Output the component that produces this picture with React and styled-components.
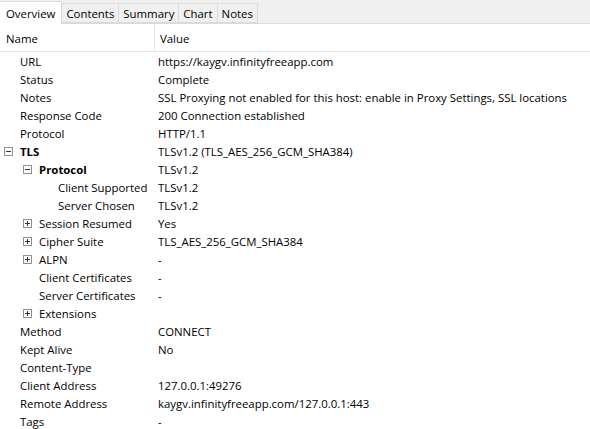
import React from 'react';
import styled, { createGlobalStyle } from 'styled-components';

const GlobalStyle = createGlobalStyle`
  html, body {
    margin: 0;
    padding: 0;
    background: #ffffff;
  }
  body {
    font-family: "Segoe UI", "Open Sans", "Noto Sans", sans-serif;
    font-size: 11.4px;
    color: #000;
  }
`;

const tabs = ['Overview', 'Contents', 'Summary', 'Chart', 'Notes'];

const rows = [
  { name: 'URL', value: 'https://kaygv.infinityfreeapp.com' },
  { name: 'Status', value: 'Complete' },
  { name: 'Notes', value: 'SSL Proxying not enabled for this host: enable in Proxy Settings, SSL locations' },
  { name: 'Response Code', value: '200 Connection established' },
  { name: 'Protocol', value: 'HTTP/1.1' },
  { name: 'TLS', value: 'TLSv1.2 (TLS_AES_256_GCM_SHA384)', level: 0, toggle: 'open', bold: true },
  { name: 'Protocol', value: 'TLSv1.2', level: 1, toggle: 'open', bold: true },
  { name: 'Client Supported', value: 'TLSv1.2', level: 2 },
  { name: 'Server Chosen', value: 'TLSv1.2', level: 2 },
  { name: 'Session Resumed', value: 'Yes', level: 1, toggle: 'closed' },
  { name: 'Cipher Suite', value: 'TLS_AES_256_GCM_SHA384', level: 1, toggle: 'closed' },
  { name: 'ALPN', value: '-', level: 1, toggle: 'closed' },
  { name: 'Client Certificates', value: '-', level: 1 },
  { name: 'Server Certificates', value: '-', level: 1 },
  { name: 'Extensions', value: '', level: 1, toggle: 'closed' },
  { name: 'Method', value: 'CONNECT' },
  { name: 'Kept Alive', value: 'No' },
  { name: 'Content-Type', value: '' },
  { name: 'Client Address', value: '127.0.0.1:49276' },
  { name: 'Remote Address', value: 'kaygv.infinityfreeapp.com/127.0.0.1:443' },
  { name: 'Tags', value: '-' },
];

function Toggle({ open }) {
  return (
    <ToggleBox>
      <svg width="9" height="9" viewBox="0 0 9 9">
        <rect x="0.5" y="0.5" width="8" height="8" fill="#fff" stroke="#919191" />
        <line x1="2" y1="4.5" x2="7" y2="4.5" stroke="#333" />
        {!open && <line x1="4.5" y1="2" x2="4.5" y2="7" stroke="#333" />}
      </svg>
    </ToggleBox>
  );
}

export default function App() {
  return (
    <>
      <GlobalStyle />
      <Panel>
        <TabBar>
          {tabs.map((t, i) => (
            <Tab key={t} $active={i === 0}>{t}</Tab>
          ))}
        </TabBar>
        <Table>
          <HeaderRow>
            <HeaderCell>Name</HeaderCell>
            <HeaderCell $divider>Value</HeaderCell>
          </HeaderRow>
          {rows.map((r, i) => (
            <Row key={i}>
              <NameCell $level={r.level || 0} $bold={r.bold}>
                {r.toggle ? <Toggle open={r.toggle === 'open'} /> : <ToggleSpace />}
                <span>{r.name}</span>
              </NameCell>
              <ValueCell>{r.value}</ValueCell>
            </Row>
          ))}
        </Table>
      </Panel>
    </>
  );
}

const Panel = styled.div`
  width: 590px;
  height: 429px;
  overflow: hidden;
  background: #ffffff;
`;

const TabBar = styled.div`
  display: flex;
  align-items: flex-end;
  height: 24px;
  background: #f0f0f0;
  border-bottom: 1px solid #dadada;
  box-sizing: border-box;
`;

const Tab = styled.div`
  box-sizing: border-box;
  height: ${(p) => (p.$active ? '23px' : '20px')};
  margin-bottom: ${(p) => (p.$active ? '-1px' : '0')};
  padding: 0 ${(p) => (p.$active ? '6px' : '4px')};
  display: flex;
  align-items: center;
  background: ${(p) => (p.$active ? '#ffffff' : '#f0f0f0')};
  border: 1px solid #dadada;
  border-bottom: ${(p) => (p.$active ? 'none' : '1px solid #dadada')};
  margin-left: -1px;
  &:first-child {
    margin-left: 0;
    border-left: none;
  }
`;

const Table = styled.div`
  display: flex;
  flex-direction: column;
`;

const HeaderRow = styled.div`
  display: grid;
  grid-template-columns: 154px 1fr;
  height: 27px;
  border-bottom: 1px solid #e5e5e5;
`;

const HeaderCell = styled.div`
  display: flex;
  align-items: center;
  padding-left: ${(p) => (p.$divider ? '5px' : '6px')};
  padding-top: 1px;
  border-left: ${(p) => (p.$divider ? '1px solid #e5e5e5' : 'none')};
`;

const Row = styled.div`
  display: grid;
  grid-template-columns: 158px 1fr;
  height: 18px;
  align-items: center;
  white-space: nowrap;
`;

const NameCell = styled.div`
  display: flex;
  align-items: center;
  padding-left: ${(p) => 4 + p.$level * 19}px;
  font-weight: ${(p) => (p.$bold ? 700 : 400)};
`;

const ToggleBox = styled.span`
  display: inline-flex;
  width: 16px;
  height: 9px;
`;

const ToggleSpace = styled.span`
  display: inline-block;
  width: 16px;
`;

const ValueCell = styled.div`
  overflow: hidden;
`;
